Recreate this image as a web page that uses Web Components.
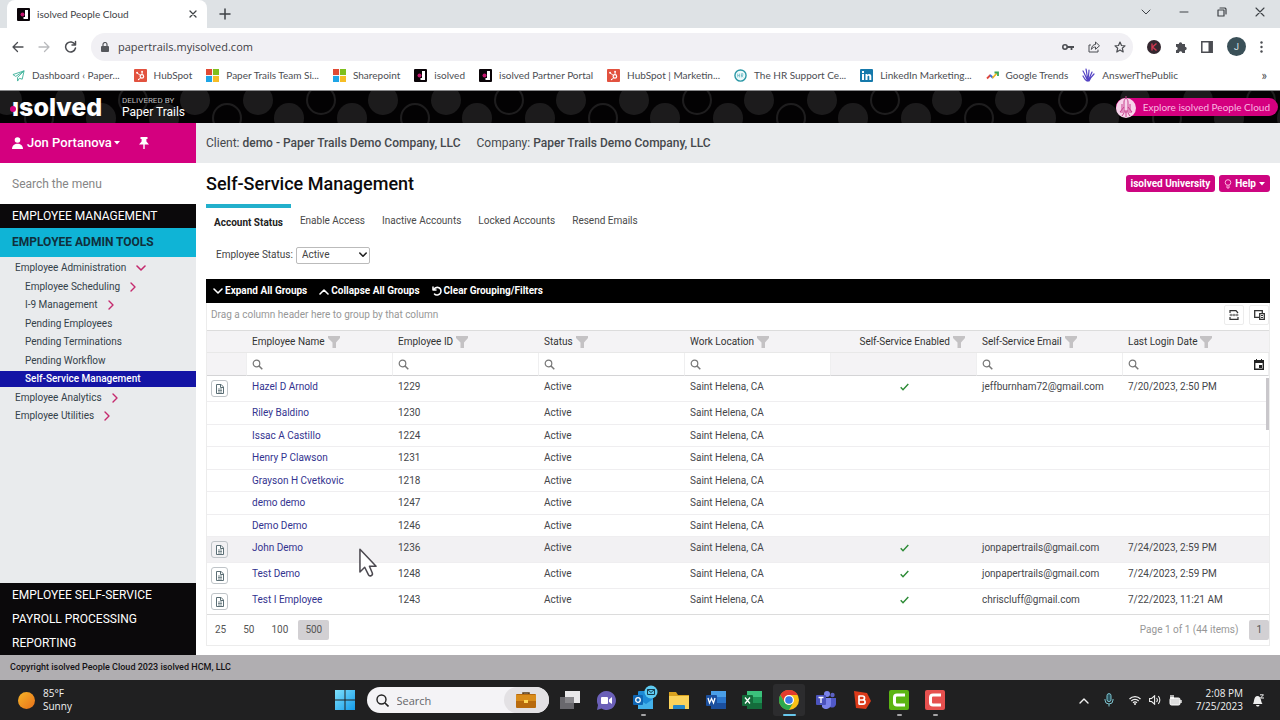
<!DOCTYPE html>
<html lang="en">
<head>
<meta charset="utf-8">
<title>isolved People Cloud</title>
<style>
  html, body { margin: 0; height: 100%; }
  body { font: 10px/12px Roboto, "Liberation Sans", sans-serif; color: #333; background: #fff; overflow: hidden; }
  .row { display: flex; flex: 1; min-height: 0; }
  main { display: flex; flex-direction: column; flex: 1; min-width: 0; }
</style>
</head>
<body>
<app-desktop>
  <browser-window slot="window">
    <app-header></app-header>
    <div class="row">
      <side-nav></side-nav>
      <main>
        <client-bar></client-bar>
        <status-page><employee-grid></employee-grid></status-page>
      </main>
    </div>
    <app-footer>Copyright isolved People Cloud 2023 isolved HCM, LLC</app-footer>
  </browser-window>
  <win-taskbar slot="taskbar"></win-taskbar>
</app-desktop>

<script>
(function () {
  const svg = (w, h, vb, body) => `<svg width="${w}" height="${h}" viewBox="${vb}" aria-hidden="true">${body}</svg>`;
  const line = (w, h, vb, d, sw = 2) =>
    svg(w, h, vb, `<path d="${d}" fill="none" stroke="currentColor" stroke-width="${sw}" stroke-linecap="round" stroke-linejoin="round"/>`);

  const BASE = `
    *, *::before, *::after { box-sizing: border-box; }
    button, input, select { font: inherit; color: inherit; margin: 0; padding: 0; border: 0; background: none; border-radius: 0; }
    button { display: inline-flex; align-items: center; justify-content: center; }
    a { color: inherit; text-decoration: none; }
    ul { list-style: none; margin: 0; padding: 0; }
    svg { display: block; flex: none; }
  `;

  function define(name, css, html) {
    customElements.define(name, class extends HTMLElement {
      connectedCallback() {
        if (this.shadowRoot) return;
        this.attachShadow({ mode: 'open' }).innerHTML = `<style>${BASE}${css}</style>${html}`;
      }
    });
  }

  const ICON = {
    isolved: svg(13, 13, '0 0 13 13', '<rect width="13" height="13" rx="1" fill="#0a0408"/><path d="M8 2h3v9H6.500V9H8z" fill="#fff"/><circle cx="5.500" cy="6.500" r="2" fill="#c4166f"/>'),
    hubspot: svg(13, 13, '0 0 14 14', '<rect width="14" height="14" rx="1" fill="#e2523f"/><g fill="none" stroke="#fff"><circle cx="8.500" cy="8" r="1.900" stroke-width="1.300"/><path d="M3 4l4 3M8.700 6V3M7 9.500L5 11.500" stroke-width="1"/></g><circle cx="3.300" cy="4" r="1" fill="#fff"/><circle cx="8.700" cy="3" r="1" fill="#fff"/><circle cx="5" cy="11.300" r=".8" fill="#fff"/>'),
    microsoft: svg(13, 13, '0 0 14 14', '<path fill="#e04a34" d="M0 0h6.500v6.500H0z"/><path fill="#7fbf1d" d="M7.500 0H14v6.500H7.500z"/><path fill="#1fa5e6" d="M0 7.500h6.500V14H0z"/><path fill="#f6bd25" d="M7.500 7.500H14V14H7.500z"/>'),
    plane: svg(13, 13, '0 0 14 14', '<path d="M13 2L1 6l3 2 9-6-7 7v4l2-3 3 1z" fill="none" stroke="#3fb29a" stroke-linejoin="round"/>'),
    hr: svg(13, 13, '0 0 14 14', '<circle cx="7" cy="7" r="6" fill="#eef9fa" stroke="#2b98a6" stroke-width="1.500"/><path d="M4 5v4M6 5v4M4 7h2M8 9V5h1.500v2H8l2 2" fill="none" stroke="#67b8c4" stroke-width=".8"/>'),
    linkedin: svg(13, 13, '0 0 13 13', '<rect width="13" height="13" rx="1" fill="#1579ab"/><path d="M2 5h2v6H2zM2 2h2v2H2zM5.500 5h1.800v.9c.8-1.400 4-1.500 4 1.300V11h-2V7.700c0-1.400-1.800-1.300-1.800 0V11h-2z" fill="#fff"/>'),
    trends: svg(13, 13, '0 0 13 13', '<g fill="none" stroke-width="1.800"><path d="M1 9.500l3.500-3.500" stroke="#e2453a"/><path d="M4 6l3 3" stroke="#3f6fd8"/><path d="M6.500 9l4.500-5" stroke="#f2b620"/><path d="M8.500 3.500H12V7" stroke="#3aa757"/></g>'),
    atp: svg(13, 14, '0 0 13 14', '<path d="M6 13C4 10 3 6 1 3M6 13C5 9 5 5 4 1M6 13C6 9 7 6 7 2M7 13c0-4 2-6 3-9M7 13c1-3 3-5 5-7M5 13C3 12 2 10 1 8" fill="none" stroke="#5443c4" stroke-width="1.200" stroke-linecap="round"/>'),
    filter: svg(12, 12, '0 0 12 12', '<path d="M0 0h12v2L8 6.500V12H4.500V6.500L0 2z" fill="#c4c2c4"/>'),
    search: svg(11, 11, '0 0 11 11', '<circle cx="4.500" cy="4.500" r="3.300" fill="none" stroke="#777" stroke-width="1.200"/><path d="M7 7l3.300 3.300" stroke="#777" stroke-width="1.500"/>'),
    check: svg(9, 8, '0 0 9 8', '<path d="M.7 4.300L3 6.700 8.300 1" fill="none" stroke="#2b8a34" stroke-width="1.400"/>'),
    doc: svg(8, 10, '0 0 8 10', '<path d="M.5.5h4.700L7.500 3v6.500h-7z" fill="#fff" stroke="#5b6e75"/><path d="M4.500.5v3h3" fill="none" stroke="#5b6e75"/><path d="M2 5h4M2 6.500h4M2 8h4" stroke="#5b6e75" stroke-width=".8"/>'),
    down: line(10, 7, '0 0 10 7', 'M1 1l4 4 4-4', 1.600),
    up: line(10, 7, '0 0 10 7', 'M1 6l4-4 4 4', 1.600),
    right: line(6, 10, '0 0 6 10', 'M1 1l4 4-4 4', 1.400),
    caret: svg(6, 4, '0 0 6 4', '<path d="M0 0h6L3 3.500z" fill="currentColor"/>'),
  };

  define('app-desktop', `
    :host { display: flex; flex-direction: column; height: 100vh; }
    .pointer { position: absolute; left: 359px; top: 547px; }
  `, `
    <slot name="window"></slot>
    <slot name="taskbar"></slot>
    <svg class="pointer" width="19" height="31" viewBox="0 0 20 32" aria-hidden="true"><path d="M1 2v24l5-5 4 8c1 2 5 1 4-2l-3-7h7z" fill="#fff" stroke="#4c4950" stroke-width="1.600" stroke-linejoin="round"/></svg>
  `);

  const BOOKMARKS = [
    ['plane', 'Dashboard ‹ Paper...'], ['hubspot', 'HubSpot'], ['microsoft', 'Paper Trails Team Si...'],
    ['microsoft', 'Sharepoint'], ['isolved', 'isolved'], ['isolved', 'isolved Partner Portal'],
    ['hubspot', 'HubSpot | Marketin...'], ['hr', 'The HR Support Ce...'], ['linkedin', 'LinkedIn Marketing...'],
    ['trends', 'Google Trends'], ['atp', 'AnswerThePublic'],
  ];

  define('browser-window', `
    :host { display: flex; flex-direction: column; flex: 1; min-height: 0; }
    .tabs { display: flex; align-items: center; height: 28px; background: #dee2e5; padding-left: 7px; color: #3e4246; }
    .tab { display: flex; align-items: center; gap: 7px; width: 200px; height: 28px; padding: 0 10px; background: #fff; border-radius: 8px 8px 0 0; font: 10px/14px Lato, sans-serif; }
    .tab span { flex: 1; }
    .new { margin-left: 12px; }
    .win { display: flex; gap: 28px; align-items: center; margin: 0 15px 4px auto; }
    .bar { display: flex; align-items: center; height: 37px; padding: 0 17px 0 12px; gap: 14px; color: #4b4d52; }
    .url { display: flex; align-items: center; gap: 14px; flex: 1; height: 28px; border-radius: 14px; background: #f1f0f4; padding: 0 7px 0 10px; }
    .url input { flex: 1; font: 11px/16px "Open Sans", sans-serif; color: #3f4145; margin-left: -5px; }
    .avatar { width: 19px; height: 19px; border-radius: 50%; background: #3a5058; color: #dfe8ea; font-size: 9px; }
    .marks { display: flex; align-items: center; height: 26px; padding: 0 13px 5px 12px; gap: 14px; font: 10px/14px Lato, sans-serif; color: #4b4d52; border-bottom: 1px solid #88888a; }
    .marks a { display: flex; align-items: center; gap: 7px; white-space: nowrap; }
    .more { margin-left: auto; font-size: 13px; }
  `, `
    <div class="tabs">
      <div class="tab">${ICON.isolved}<span>isolved People Cloud</span><button aria-label="Close tab">${line(8, 8, '0 0 8 8', 'M1 1l6 6M7 1L1 7', 1.300)}</button></div>
      <button class="new" aria-label="New tab">${line(12, 12, '0 0 12 12', 'M6 1v10M1 6h10', 1.500)}</button>
      <div class="win">
        <button aria-label="Search tabs">${line(10, 6, '0 0 10 6', 'M1 1l4 4 4-4', 1)}</button>
        <button aria-label="Minimize">${line(10, 10, '0 0 10 10', 'M1 5h8', 1)}</button>
        <button aria-label="Restore">${line(10, 10, '0 0 10 10', 'M1 3h6v6H1zM3 1h5l1 1v5', 1.200)}</button>
        <button aria-label="Close">${line(10, 10, '0 0 10 10', 'M1 1l8 8M9 1L1 9', 1.100)}</button>
      </div>
    </div>
    <div class="bar">
      <button aria-label="Back">${line(12, 12, '0 0 12 12', 'M11 6H1M5.500 1.500L1 6l4.500 4.500', 1.300)}</button>
      <button aria-label="Forward" style="color:#b9babd">${line(12, 12, '0 0 12 12', 'M1 6h10M6.500 1.500L11 6l-4.500 4.500', 1.300)}</button>
      <button aria-label="Reload">${line(13, 13, '0 0 13 13', 'M11 4.500A5 5 0 1 0 11.500 8M11.500 1.500v3.500H8', 1.500)}</button>
      <div class="url">
        ${svg(8, 10, '0 0 8 10', '<rect y="4" width="8" height="6" rx="1" fill="#55575c"/><path d="M2 4V2.500a2 2 0 0 1 4 0V4" fill="none" stroke="#55575c" stroke-width="1.200"/>')}
        <input type="text" aria-label="Address" value="papertrails.myisolved.com">
        <button aria-label="Passwords">${svg(12, 8, '0 0 12 8', '<circle cx="3" cy="4" r="2.200" fill="none" stroke="#4b4d52" stroke-width="1.600"/><path d="M5 4h7M9.500 4v3" stroke="#4b4d52" stroke-width="1.800"/>')}</button>
        <button aria-label="Share">${line(12, 12, '0 0 12 12', 'M2.500 4H1v7h9V9M3.500 8c0-3 2-4.500 4-4.500V1l4 3.800-4 3.500V6C6 6 4.500 6.500 3.500 8z', 1)}</button>
        <button aria-label="Bookmark">${line(12, 12, '0 0 12 12', 'M6 1l1.500 3.500 3.500.3-2.700 2.400.9 3.800L6 9l-3.200 2 .9-3.800L1 4.800l3.500-.3z', 1.200)}</button>
      </div>
      <button aria-label="Extension K">${svg(14, 14, '0 0 14 14', '<circle cx="7" cy="7" r="7" fill="#34272f"/><path d="M5 3.500v7M9.500 3.500L5.500 7l4 3.500" fill="none" stroke="#cf3850" stroke-width="1.400"/>')}</button>
      <button aria-label="Extensions">${svg(12, 12, '0 0 12 12', '<path d="M1 3h2.800a1.700 1.700 0 1 1 3.400 0H10v2.800a1.700 1.700 0 1 1 0 3.400V12H7.300a1.700 1.700 0 0 0-3.400 0H1V9.200a1.700 1.700 0 0 0 0-3.400z" fill="#4b4d52"/>')}</button>
      <button aria-label="Side panel">${svg(12, 12, '0 0 12 12', '<path d="M.8.8h10.400v10.400H.8z" fill="none" stroke="#4b4d52" stroke-width="1.500"/><path d="M7.500 1H11v10H7.500z" fill="#4b4d52"/>')}</button>
      <button class="avatar" aria-label="Profile">J</button>
      <button aria-label="Menu">${svg(3, 12, '0 0 3 12', '<g fill="#4b4d52"><circle cx="1.500" cy="1.500" r="1.200"/><circle cx="1.500" cy="6" r="1.200"/><circle cx="1.500" cy="10.500" r="1.200"/></g>')}</button>
    </div>
    <nav class="marks">${BOOKMARKS.map(([i, t]) => `<a href="#">${ICON[i]}${t}</a>`).join('')}<button class="more" aria-label="More bookmarks">»</button></nav>
    <slot></slot>
  `);

  define('app-header', `
    :host { display: flex; position: relative; align-items: center; height: 32px; padding: 0 2px 0 12px; background: #030203; color: #fff; }
    .dots { position: absolute; inset: 0; width: 100%; height: 100%; }
    .logo, .by, .explore { position: relative; }
    .logo { display: flex; align-items: center; width: 100px; font: 800 25px/30px Inter, sans-serif; }
    .logo i { position: absolute; left: -2px; top: 14px; width: 6px; height: 6px; border-radius: 50%; background: #d4007f; }
    .by { margin-left: 10px; font-size: 12px; line-height: 12px; }
    .by small { display: block; font-size: 8px; line-height: 10px; color: #bbb; }
    .explore { display: flex; align-items: center; gap: 7px; margin-left: auto; height: 18px; padding-right: 8px; border-radius: 9px; background: #d4007f; color: #f9b8e0; font: 10px/14px Lato, sans-serif; }
  `, `
    <svg class="dots" aria-hidden="true">
      <defs><pattern id="dots" width="188" height="32" patternUnits="userSpaceOnUse">
        <g fill="#1c1b1c"><circle cx="7" cy="9" r="15"/><circle cx="195" cy="9" r="15"/><circle cx="70" cy="9" r="15"/><circle cx="101" cy="27" r="15"/><circle cx="164" cy="27" r="15"/></g>
        <g fill="none" stroke="#1e1d1e" stroke-width="2"><circle cx="133" cy="9" r="14"/><circle cx="39" cy="27" r="14"/></g>
      </pattern></defs>
      <rect width="100%" height="100%" fill="url(#dots)"/>
    </svg>
    <a class="logo" href="#" aria-label="isolved"><i></i>ısolved</a>
    <div class="by"><small>DELIVERED BY</small>Paper Trails</div>
    <a class="explore" href="#">${svg(20, 22, '0 0 20 22', '<circle cx="10" cy="12" r="10" fill="#f7d3ea"/><path d="M10 0v3M8 6c0-2 1-3 2-4 1 1 2 2 2 4v9H8zM8 11l-4 5h12l-4-5M6 8v7M14 8v7M8 17l-2 3M12 17l2 3M10 16v5" fill="#f7d3ea" stroke="#c9408f"/>')}Explore isolved People Cloud</a>
  `);

  const TREE = [
    ['Employee Administration', 'down'], ['Employee Scheduling', 'right', 'sub'], ['I-9 Management', 'right', 'sub'],
    ['Pending Employees', '', 'sub'], ['Pending Terminations', '', 'sub'], ['Pending Workflow', '', 'sub'],
    ['Self-Service Management', '', 'sub on'], ['Employee Analytics', 'right'], ['Employee Utilities', 'right'],
  ];

  define('side-nav', `
    :host { display: flex; flex-direction: column; flex: none; width: 196px; background: #e9ebed; }
    .user { display: flex; align-items: center; height: 40px; padding-left: 12px; background: #d4007f; color: #fff; font-size: 13px; font-weight: 500; }
    .user button { gap: 2px; }
    .user b { margin-left: 2px; font-weight: 500; }
    .user .pin { margin-left: 19px; }
    .find { height: 41px; padding: 0 12px; background: #fff; font-size: 12px; color: #555; }
    .find::placeholder { color: #858585; opacity: 1; }
    .group { display: block; padding: 0 12px; background: #0b090b; color: #fff; font-size: 12px; line-height: 24px; }
    .group.on { background: #0fb4d6; color: #10303c; font-weight: 700; line-height: 29px; }
    ul { flex: 1; padding-top: 3px; }
    li { margin-bottom: 3px; }
    li:nth-child(even) { margin-bottom: 2px; }
    li a { display: flex; align-items: center; gap: 10px; line-height: 16px; padding-left: 15px; color: #34424a; }
    li.sub a { padding-left: 25px; }
    li.on a { background: #1414a5; color: #fff; font-weight: 500; }
    li svg { color: #c52a6e; }
  `, `
    <div class="user">
      <button>${svg(11, 12, '0 0 11 12', '<circle cx="5.500" cy="3" r="2.800" fill="#fff"/><path d="M0 12c0-7 11-7 11 0z" fill="#fff"/>')}<b>Jon Portanova</b>${ICON.caret}</button>
      <button class="pin" aria-label="Pin menu">${svg(10, 12, '0 0 10 12', '<path d="M1.500 0h7v2H7.400v2.500L10 7.500H5.700V12H4.300V7.500H0l2.600-3V2H1.500z" fill="#fff"/>')}</button>
    </div>
    <input class="find" type="search" placeholder="Search the menu" aria-label="Search the menu">
    <a class="group" href="#">EMPLOYEE MANAGEMENT</a>
    <a class="group on" href="#">EMPLOYEE ADMIN TOOLS</a>
    <ul>${TREE.map(([t, i, c]) => `<li class="${c || ''}"><a href="#">${t}${i ? ICON[i] : ''}</a></li>`).join('')}</ul>
    <a class="group" href="#">EMPLOYEE SELF-SERVICE</a>
    <a class="group" href="#">PAYROLL PROCESSING</a>
    <a class="group" href="#">REPORTING</a>
  `);

  define('client-bar', `
    :host { display: flex; align-items: center; gap: 16px; flex: none; height: 40px; padding: 0 10px; background: #e9ebed; font-size: 12px; color: #45484c; }
    b { font-weight: 500; }
  `, `
    <span>Client: <b>demo - Paper Trails Demo Company, LLC</b></span>
    <span>Company: <b>Paper Trails Demo Company, LLC</b></span>
  `);

  const TABS = ['Account Status', 'Enable Access', 'Inactive Accounts', 'Locked Accounts', 'Resend Emails'];

  define('status-page', `
    :host { display: block; padding: 0 10px; }
    header { display: flex; align-items: center; gap: 4px; height: 41px; }
    h1 { flex: 1; margin: 0; font-size: 18px; line-height: 24px; font-weight: 500; color: #0c0a0c; }
    header button { height: 17px; padding: 0 5px; gap: 3px; border-radius: 3px; background: #cd0580; color: #fff; font-weight: 700; }
    .tabs { display: flex; gap: 1px; height: 32px; }
    .tabs button { align-items: flex-start; padding: 11px 8px 0; color: #4a4a4a; }
    .tabs .on { padding-top: 9px; border-top: 4px solid #22b0cc; font-weight: 700; color: #222; }
    .status { display: flex; align-items: center; gap: 3px; height: 38px; margin-bottom: 5px; padding-left: 10px; color: #444; }
    .pick { position: relative; }
    .pick svg { position: absolute; right: 3px; top: 5px; color: #222; pointer-events: none; }
    select { display: block; appearance: none; width: 74px; height: 17px; padding: 0 5px; border: 1px solid #bbb; border-radius: 2px; background: #fff; }
  `, `
    <header>
      <h1>Self-Service Management</h1>
      <button>isolved University</button>
      <button>${svg(8, 10, '0 0 8 10', '<circle cx="4" cy="3.500" r="2.800" fill="none" stroke="#ffb5df"/><path d="M3 6.500v2.500h2V6.500" fill="none" stroke="#ffb5df"/>')}Help ${ICON.caret}</button>
    </header>
    <div class="tabs" role="tablist">${TABS.map((t, i) => `<button role="tab" class="${i ? '' : 'on'}">${t}</button>`).join('')}</div>
    <div class="status"><label for="status">Employee Status:</label><div class="pick"><select id="status"><option>Active</option><option>Inactive</option></select>${line(8, 6, '0 0 10 7', 'M1 1l4 4 4-4', 2)}</div></div>
    <slot></slot>
  `);

  const COLUMNS = ['Employee Name', 'Employee ID', 'Status', 'Work Location', 'Self-Service Enabled', 'Self-Service Email', 'Last Login Date'];
  const PEOPLE = [
    ['Hazel D Arnold', 1229, 'jeffburnham72@gmail.com', '7/20/2023, 2:50 PM'],
    ['Riley Baldino', 1230], ['Issac A Castillo', 1224], ['Henry P Clawson', 1231],
    ['Grayson H Cvetkovic', 1218], ['demo demo', 1247], ['Demo Demo', 1246],
    ['John Demo', 1236, 'jonpapertrails@gmail.com', '7/24/2023, 2:59 PM'],
    ['Test Demo', 1248, 'jonpapertrails@gmail.com', '7/24/2023, 2:59 PM'],
    ['Test I Employee', 1243, 'chriscluff@gmail.com', '7/22/2023, 11:21 AM'],
  ];

  const row = ([name, id, mail, login]) => `
    <tr class="${mail ? 'tall' : ''} ${name === 'John Demo' ? 'hover' : ''}">
      <td>${mail ? `<button class="doc" aria-label="Details">${ICON.doc}</button>` : ''}</td>
      <td><a href="#">${name}</a></td><td>${id}</td><td>Active</td><td>Saint Helena, CA</td>
      <td class="mark">${mail ? ICON.check : ''}</td><td>${mail || ''}</td><td>${login || ''}</td>
    </tr>`;

  define('employee-grid', `
    :host { display: block; color: #45464a; }
    .tools { display: flex; align-items: center; gap: 12px; height: 24px; padding-left: 7px; background: #000; color: #fff; font-weight: 700; }
    .tools button { gap: 2px; font-weight: 700; }
    .frame { border: 1px solid #ececec; border-top: 0; }
    .group { display: flex; gap: 5px; height: 27px; padding: 2px 0 0 4px; color: #979797; }
    .group span { flex: 1; padding-top: 4px; }
    .group button { width: 20px; height: 20px; border: 1px solid #ececec; border-radius: 2px; }
    .body { position: relative; }
    .thumb { position: absolute; right: 0; top: 48px; width: 3px; height: 52px; background: #c9c7cb; }
    table { width: 100%; table-layout: fixed; border-collapse: separate; border-spacing: 0; }
    th, td { padding: 5px 0 0 5px; text-align: left; vertical-align: top; white-space: nowrap; font-weight: 400; }
    th:first-child { width: 40px; }
    .heads th { height: 23px; background: #f4f3f5; border-top: 1px solid #dcdcdc; border-bottom: 1px solid #e8e8e8; color: #333; }
    .heads span { display: inline-flex; gap: 3px; align-items: center; }
    .heads th:nth-child(6) { text-align: right; padding-right: 12px; }
    .filters th { height: 23px; padding-top: 0; vertical-align: middle; border-right: 1px solid #efeff0; border-bottom: 1px solid #d4d4d6; }
    .filters .off { background: #f4f3f5; }
    .filters label { display: flex; align-items: center; gap: 4px; padding-right: 4px; }
    .filters input { flex: 1; min-width: 0; height: 18px; }
    td { height: 22px; border-bottom: 1px solid #efeef0; }
    tr:nth-child(even) td { height: 23px; }
    tr.tall td { height: 26px; }
    .hover td { background: #f2f1f3; }
    td a { color: #33338f; }
    td .doc { display: flex; width: 17px; height: 17px; margin: -1px 0 0 -1px; border: 1px solid #bfc4c8; border-radius: 3px; }
    td.mark { padding: 7px 0 0; }
    .mark svg { margin: 0 auto; }
    tbody tr:last-child td { border-bottom: 1px solid #dcdcdc; }
    .pager { display: flex; align-items: center; gap: 3px; height: 30px; padding: 0 0 0 1px; color: #555; }
    .pager button { height: 20px; padding: 0 7px; border-radius: 2px; }
    .pager .on { background: #d2d0d3; }
    .pager span { margin: 0 8px 0 auto; color: #979797; }
  `, `
    <div class="tools">
      <button>${ICON.down}Expand All Groups</button>
      <button>${ICON.up}Collapse All Groups</button>
      <button>${line(10, 10, '0 0 10 10', 'M1 1v3h3M1.500 4C4-.5 9 1.500 9 5c0 4-5 5-6.500 3', 1.500)}Clear Grouping/Filters</button>
    </div>
    <div class="frame">
      <div class="group">
        <span>Drag a column header here to group by that column</span>
        <button aria-label="Export">${svg(10, 10, '0 0 10 10', '<path d="M1 3V.700h6L9 3M1 7v2.300h8V7" fill="none" stroke="#333" stroke-width="1.200"/><path d="M.5 5h9M2 3.800v2.400M5 3.800v2.400M8 3.800v2.400" stroke="#555" stroke-width=".9"/>')}</button>
        <button aria-label="Column chooser">${svg(11, 10, '0 0 11 10', '<path d="M5 7.300H.700V.700h7.600V3" fill="none" stroke="#333" stroke-width="1.300"/><path d="M5.700 3.700h4.600v5.600H5.700z" fill="#fff" stroke="#333" stroke-width="1.300"/><path d="M7 5.500h2M7 7.500h2" stroke="#333"/>')}</button>
      </div>
      <div class="body">
        <table>
          <thead>
            <tr class="heads"><th></th>${COLUMNS.map(c => `<th scope="col"><span>${c}${ICON.filter}</span></th>`).join('')}</tr>
            <tr class="filters"><th class="off"></th>${COLUMNS.map((c, i) => i === 4 ? '<th class="off"></th>'
              : `<th><label>${ICON.search}<input type="text" aria-label="Filter ${c}">${i === 6 ? svg(10, 11, '0 0 10 11', '<path d="M.700 2h8.600v8.300H.700z" fill="none" stroke="#222" stroke-width="1.400"/><path d="M0 1h10v3H0zM2 0h1v2H2zM7 0h1v2H7zM5 6h3v3H5z" fill="#222"/>') : ''}</label></th>`).join('')}</tr>
          </thead>
          <tbody>${PEOPLE.map(row).join('')}</tbody>
        </table>
        <div class="thumb"></div>
      </div>
      <div class="pager">
        <button>25</button><button>50</button><button>100</button><button class="on">500</button>
        <span>Page 1 of 1 (44 items)</span><button class="on">1</button>
      </div>
    </div>
  `);

  define('app-footer', `
    :host { display: block; flex: none; padding-left: 10px; background: #b0aeb1; color: #141214; font-size: 9px; line-height: 25px; font-weight: 500; }
  `, `<slot></slot>`);

  const office = (l, c1, c2, c3) => svg(20, 20, '0 0 20 20',
    `<rect x="5" y="1" width="15" height="18" rx="1" fill="${c2}"/><path d="M5 1h15v6H5z" fill="${c1}"/><path d="M5 13h15v6H5z" fill="${c3}"/><rect y="5" width="11" height="11" rx="1" fill="${c3}"/><path d="${l}" fill="none" stroke="#fff" stroke-width="1.300"/>`);
  const camtasia = c => svg(20, 20, '0 0 20 20', `<rect width="20" height="20" rx="2" fill="${c}"/><path d="M16 5H8Q5.500 5 5.500 7.500v5Q5.500 15 8 15h8" fill="none" stroke="#fff" stroke-width="3"/>`);

  const APPS = [
    ['Task view', svg(20, 18, '0 0 20 18', '<rect x="5" width="15" height="12" fill="#e9e8ea"/><rect y="6" width="14" height="12" fill="#77767a" opacity=".85"/>')],
    ['Chat', svg(19, 19, '0 0 19 19', '<path d="M9.500 0a9.500 9.500 0 1 1-5 17.600L0 19l1-5A9.500 9.500 0 0 1 9.500 0z" fill="#6b60b8"/><rect x="4" y="6" width="7" height="7" rx="1" fill="#fff"/><path d="M12 8.500L15 6v7l-3-2z" fill="#fff"/>')],
    ['Outlook', svg(20, 20, '0 0 20 20', '<rect x="5" y="1" width="15" height="17" rx="1" fill="#1c8ad6"/><path d="M5 9l8 5 7-5v10H5z" fill="#43b1ea"/><rect y="5" width="10" height="10" rx="1" fill="#0f66b4"/><circle cx="5" cy="10" r="2.300" fill="none" stroke="#fff" stroke-width="1.300"/>'), 'run badge'],
    ['File Explorer', svg(20, 18, '0 0 20 18', '<path d="M0 1h7l2 3h11v14H0z" fill="#d9a21f"/><path d="M0 5h20v13H0z" fill="#fbd35b"/><path d="M4 18v-3q0-1 1-1h10q1 0 1 1v3z" fill="#2587c8"/>')],
    ['Word', office('M2 8l1.500 5L5.500 8.500 7.500 13 9 8', '#4a9fe8', '#2b76cc', '#1b4f9e')],
    ['Excel', office('M3 7.500l5 6M8 7.500l-5 6', '#3bc27c', '#1e9455', '#146c3b')],
    ['Chrome', svg(20, 20, '0 0 20 20', '<circle cx="10" cy="10" r="10" fill="#fbc116"/><path d="M1.300 5A10 10 0 0 1 18.700 5H10a5 5 0 0 0-4.300 7.500z" fill="#e33b2e"/><path d="M1.300 5A10 10 0 0 0 10 20l4.300-7.500A5 5 0 0 1 5.700 12.500z" fill="#2da94f"/><circle cx="10" cy="10" r="5" fill="#fff"/><circle cx="10" cy="10" r="3.800" fill="#3b78e7"/>'), 'active'],
    ['Teams', svg(20, 18, '0 0 20 18', '<circle cx="16.500" cy="4" r="2.200" fill="#5c62c4"/><circle cx="11" cy="3" r="3" fill="#7b83eb"/><path d="M13 7h7v5a4 4 0 0 1-6 4z" fill="#5059c9"/><path d="M6 7h9v6a5 5 0 0 1-9 3z" fill="#7b83eb"/><rect y="4" width="10" height="10" rx="1" fill="#4b53bc"/><path d="M2.500 6.500h5M5 6.500V12" stroke="#fff" stroke-width="1.300"/>')],
    ['Bomgar', svg(19, 20, '0 0 19 20', '<path d="M1 1l13 2 4 8-5 8-10-1z" fill="#dc3a1a"/><path d="M6 5.500v9M6 6h3.500a2 2 0 0 1 0 4H6h4a2 2 0 0 1 0 4.200H6" fill="none" stroke="#fff" stroke-width="1.700"/>')],
    ['Camtasia', camtasia('#5cb512'), 'run'],
    ['Camtasia Recorder', camtasia('#e6504f'), 'run'],
  ];

  define('win-taskbar', `
    :host { display: grid; grid-template-columns: 1fr auto 1fr; align-items: center; flex: none; height: 40px; background: #202021; color: #f1f1f1; font: 10px/13px "Open Sans", sans-serif; }
    .weather { display: flex; align-items: center; gap: 8px; padding-left: 18px; text-align: left; justify-self: start; }
    .mid { display: flex; align-items: center; }
    .search { display: flex; align-items: center; gap: 8px; width: 182px; height: 26px; margin: 0 11px 0 12px; padding-left: 9px; border-radius: 13px; background: #f4f3f6; color: #55565a; font-size: 11px; }
    .search input { flex: 1; min-width: 0; }
    .search input::placeholder { color: #65666a; opacity: 1; }
    .search button { width: 45px; height: 26px; border-radius: 13px; background: #e3e1e4; }
    .apps { display: flex; align-items: center; justify-content: space-between; width: 386px; }
    .apps button { position: relative; width: 20px; height: 32px; }
    .apps .run::after, .apps .active::after { content: ""; position: absolute; left: 8px; bottom: 0; width: 5px; height: 2px; border-radius: 1px; background: #a5a4a6; }
    .apps .active::after { left: 4px; width: 13px; background: #68c7ec; }
    .apps .active::before { content: ""; position: absolute; inset: 0 -6px; border-radius: 3px; background: #2c2c2e; z-index: -1; }
    .apps .active { z-index: 0; }
    .apps b { position: absolute; left: 11px; top: 1px; }
    .tray { display: flex; align-items: center; gap: 9px; justify-self: end; padding-right: 16px; }
    .tray .lead { padding-right: 6px; }
    .tray .status { display: flex; gap: 8px; }
    .tray time { text-align: right; margin-left: 5px; }
  `, `
    <button class="weather">${svg(17, 17, '0 0 17 17', '<defs><linearGradient id="sun" x2="1" y2="1"><stop stop-color="#f5b428"/><stop offset="1" stop-color="#e8701a"/></linearGradient></defs><circle cx="8.500" cy="8.500" r="8.500" fill="url(#sun)"/>')}<span>85°F<br>Sunny</span></button>
    <div class="mid">
      <button aria-label="Start">${svg(20, 20, '0 0 20 20', '<defs><linearGradient id="win" x2="1" y2="1"><stop stop-color="#7fe0fb"/><stop offset="1" stop-color="#149bea"/></linearGradient></defs><path d="M0 0h9.500v9.500H0zM10.500 0H20v9.500h-9.500zM0 10.500h9.500V20H0zM10.500 10.500H20V20h-9.500z" fill="url(#win)"/>')}</button>
      <div class="search">
        ${svg(13, 13, '0 0 13 13', '<circle cx="5.500" cy="5.500" r="4.500" fill="none" stroke="#222" stroke-width="1.400"/><path d="M9 9l3.500 3.500" stroke="#222" stroke-width="1.600"/>')}
        <input type="search" placeholder="Search" aria-label="Search">
        <button aria-label="Search highlights">${svg(20, 16, '0 0 20 16', '<path d="M7 3V1h6v2" fill="none" stroke="#5a3a14" stroke-width="1.500"/><rect y="2" width="20" height="14" rx="1" fill="#b86a0d"/><path d="M0 3h20v6H0z" fill="#d98c1b"/><rect x="8" y="8" width="4" height="3" fill="#ffd95a"/>')}</button>
      </div>
      <div class="apps">${APPS.map(([n, i, c]) => `<button aria-label="${n}" class="${c || ''}">${i}${c === 'run badge'
        ? `<b>${svg(14, 14, '0 0 14 14', '<circle cx="7" cy="7" r="6.500" fill="#5ecbf1"/><path d="M3.500 4.500h7v5h-7zl3.500 3 3.500-3" fill="none" stroke="#173a4c"/>')}</b>` : ''}</button>`).join('')}</div>
    </div>
    <div class="tray">
      <button class="lead" aria-label="Hidden icons">${line(10, 7, '0 0 10 7', 'M1 6l4-4 4 4', 1.400)}</button>
      <button class="lead" aria-label="Microphone">${svg(10, 14, '0 0 10 14', '<rect x="3" y=".6" width="4" height="8" rx="2" fill="#2b5560" stroke="#7dc3ce"/><path d="M1 6v1a4 4 0 0 0 8 0V6M5 11v2.500" fill="none" stroke="#7dc3ce"/>')}</button>
      <div class="status">
        <button aria-label="Network">${svg(12, 10, '0 0 12 10', '<g fill="none" stroke="#eee" stroke-width="1.200"><path d="M.5 4a7.500 7.500 0 0 1 11 0M2.300 6a5 5 0 0 1 7.400 0M4 7.800a3 3 0 0 1 4 0"/></g><circle cx="6" cy="9" r="1" fill="#eee"/>')}</button>
        <button aria-label="Volume">${svg(12, 10, '0 0 12 10', '<path d="M.6 3.500h2l3-2.700v8.400l-3-2.700h-2zM7.500 3a3 3 0 0 1 0 4M9.300 1.200a5.500 5.500 0 0 1 0 7.600" fill="none" stroke="#eee" stroke-width="1.100"/>')}</button>
        <button aria-label="Battery">${svg(13, 11, '0 0 13 11', '<rect x="1" y="3" width="10" height="7" rx="1.500" fill="#ddd" stroke="#fff"/><path d="M12 5v3M2 0v3M4 0v3M1 3h4" stroke="#fff" stroke-width="1.300"/>')}</button>
      </div>
      <time>2:08 PM<br>7/25/2023</time>
      <button aria-label="Notifications">${svg(12, 13, '0 0 12 13', '<path d="M1 10c1.500-2 .5-8 4.500-8s3 6 5 8zM4 11h3.500c-.500 2-3 2-3.500 0z" fill="#eee"/><path d="M8 .8h3.500L8.500 4H12M5 5.500h2.500L5 8h3" fill="none" stroke="#eee"/>')}</button>
    </div>
  `);
})();
</script>
</body>
</html>
